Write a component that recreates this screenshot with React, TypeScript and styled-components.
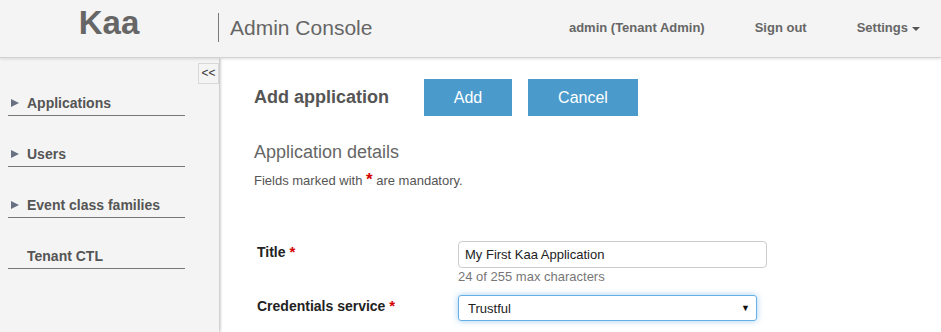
import React from "react";
import styled, { createGlobalStyle } from "styled-components";

const GlobalStyle = createGlobalStyle`
  html, body {
    margin: 0;
    padding: 0;
    background: #ffffff;
    font-family: "Liberation Sans", Arial, sans-serif;
  }
`;

const Page = styled.div`
  display: flex;
  flex-direction: column;
  height: 100vh;
  overflow: hidden;
`;

const Header = styled.header`
  position: relative;
  z-index: 2;
  height: 58px;
  box-sizing: border-box;
  padding-bottom: 2px;
  display: flex;
  align-items: center;
  background: #f4f4f4;
  border-bottom: 1px solid #d2d2d2;
  box-shadow: 0 1px 3px rgba(0, 0, 0, 0.12);
  flex-shrink: 0;
`;

const Logo = styled.div`
  width: 218px;
  text-align: center;
  font-size: 33px;
  font-weight: bold;
  color: #666;
  margin-bottom: 10px;
`;

const Divider = styled.div`
  width: 0;
  height: 29px;
  border-left: 1px solid #7a7a7a;
`;

const ConsoleTitle = styled.div`
  padding-left: 11px;
  font-size: 21px;
  color: #666;
`;

const TopNav = styled.nav`
  margin-left: auto;
  padding-right: 21px;
  display: flex;
  align-items: center;
  gap: 50px;
`;

const TopLink = styled.span`
  font-size: 13px;
  font-weight: bold;
  color: #666;
  display: inline-flex;
  align-items: center;
`;

const Caret = styled.span`
  margin-left: 4px;
  margin-top: 2px;
  width: 0;
  height: 0;
  border-left: 4px solid transparent;
  border-right: 4px solid transparent;
  border-top: 4px solid #555;
`;

const Body = styled.div`
  flex: 1;
  display: flex;
  min-height: 0;
`;

const Sidebar = styled.aside`
  position: relative;
  z-index: 1;
  width: 219px;
  flex-shrink: 0;
  background: #f4f4f4;
  box-shadow: 1px 0 3px rgba(0, 0, 0, 0.3);
  display: flex;
  flex-direction: column;
`;

const Toggle = styled.button`
  align-self: flex-end;
  margin-top: 5px;
  width: 21px;
  height: 21px;
  box-sizing: border-box;
  padding: 0;
  border: 1px solid #d8d8d8;
  background: transparent;
  font-family: "Liberation Sans", Arial, sans-serif;
  font-size: 12px;
  color: #333;
  line-height: 17px;
`;

const NavList = styled.ul`
  list-style: none;
  margin: 0;
  padding: 10px 0 0;
  display: flex;
  flex-direction: column;
  gap: 29px;
`;

const NavItem = styled.li<{ $arrow?: boolean }>`
  margin: 0 34px 0 8px;
  padding: 0 0 3px ${(p) => (p.$arrow ? "3px" : "19px")};
  border-bottom: 1px solid #777;
  display: flex;
  align-items: center;
  font-size: 14px;
  line-height: 18px;
  font-weight: bold;
  color: #555;
`;

const Arrow = styled.span`
  width: 0;
  height: 0;
  margin-right: 8px;
  margin-top: -1px;
  border-top: 4.5px solid transparent;
  border-bottom: 4.5px solid transparent;
  border-left: 8px solid #677182;
`;

const Main = styled.main`
  flex: 1;
  background: #fff;
  padding: 21px 0 0 35px;
`;

const TitleRow = styled.div`
  display: flex;
  align-items: center;
  height: 37px;
`;

const PageTitle = styled.h1`
  margin: 0 35px 0 0;
  font-size: 18px;
  font-weight: bold;
  color: #555;
`;

const Button = styled.button<{ $width: number }>`
  width: ${(p) => p.$width}px;
  height: 37px;
  margin-right: 16px;
  border: none;
  background: #4a9bcc;
  color: #fff;
  font-family: "Liberation Sans", Arial, sans-serif;
  font-size: 16px;
`;

const SectionTitle = styled.h2`
  margin: 25px 0 0;
  font-size: 18px;
  line-height: 22px;
  font-weight: normal;
  color: #666;
`;

const Hint = styled.div`
  margin-top: 10px;
  font-size: 13px;
  line-height: 15px;
  color: #555;
`;

const Required = styled.span<{ $size?: number }>`
  color: #d40000;
  font-weight: bold;
  font-size: ${(p) => p.$size ?? 15}px;
  line-height: 0;
`;

const Form = styled.div`
  margin-top: 53px;
  display: grid;
  grid-template-columns: 204px auto;
  align-items: start;
  row-gap: 10px;
`;

const Label = styled.label`
  padding: 3px 0 0 3px;
  font-size: 14px;
  line-height: 17px;
  font-weight: bold;
  color: #222;
`;

const Field = styled.div`
  display: flex;
  flex-direction: column;
`;

const TextInput = styled.input`
  width: 309px;
  height: 27px;
  box-sizing: border-box;
  padding: 0 6px;
  border: 1px solid #ccc;
  border-radius: 4px;
  font-family: "Liberation Sans", Arial, sans-serif;
  font-size: 13px;
  color: #222;
  outline: none;
`;

const Counter = styled.div`
  margin-top: 1px;
  font-size: 13px;
  line-height: 16px;
  color: #777;
`;

const SelectBox = styled.div`
  width: 299px;
  height: 26px;
  box-sizing: border-box;
  padding: 0 6px 0 9px;
  display: flex;
  align-items: center;
  justify-content: space-between;
  border: 1px solid #66afe9;
  border-radius: 3px;
  box-shadow: 0 0 6px rgba(102, 175, 233, 0.6);
  font-size: 13px;
  color: #222;
`;

const SelectArrow = styled.span`
  font-size: 9px;
  color: #111;
`;

const sideItems = [
  { label: "Applications", arrow: true },
  { label: "Users", arrow: true },
  { label: "Event class families", arrow: true },
  { label: "Tenant CTL", arrow: false },
];

const App: React.FC = () => {
  const title = "My First Kaa Application";
  return (
    <Page>
      <GlobalStyle />
      <Header>
        <Logo>Kaa</Logo>
        <Divider />
        <ConsoleTitle>Admin Console</ConsoleTitle>
        <TopNav>
          <TopLink>admin (Tenant Admin)</TopLink>
          <TopLink>Sign out</TopLink>
          <TopLink>
            Settings
            <Caret />
          </TopLink>
        </TopNav>
      </Header>
      <Body>
        <Sidebar>
          <Toggle>&lt;&lt;</Toggle>
          <NavList>
            {sideItems.map((item) => (
              <NavItem key={item.label} $arrow={item.arrow}>
                {item.arrow && <Arrow />}
                {item.label}
              </NavItem>
            ))}
          </NavList>
        </Sidebar>
        <Main>
          <TitleRow>
            <PageTitle>Add application</PageTitle>
            <Button $width={88}>Add</Button>
            <Button $width={110}>Cancel</Button>
          </TitleRow>
          <SectionTitle>Application details</SectionTitle>
          <Hint>
            Fields marked with <Required $size={17}>*</Required> are mandatory.
          </Hint>
          <Form>
            <Label>
              Title <Required>*</Required>
            </Label>
            <Field>
              <TextInput defaultValue={title} />
              <Counter>{title.length} of 255 max characters</Counter>
            </Field>
            <Label>
              Credentials service <Required>*</Required>
            </Label>
            <SelectBox>
              Trustful
              <SelectArrow>▼</SelectArrow>
            </SelectBox>
          </Form>
        </Main>
      </Body>
    </Page>
  );
};

export default App;
